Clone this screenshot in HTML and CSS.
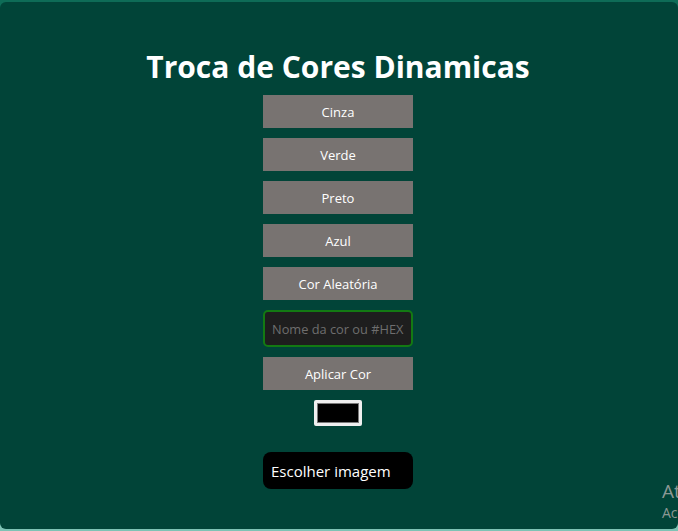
FILE: index.html
```html
<!DOCTYPE html>
<html lang="pt-BR">
<head>
<meta charset="utf-8">
<title>Troca de Cores Dinamicas</title>
<link rel="stylesheet" href="styles.css">
</head>
<body>
<main class="panel">
  <h1 class="title">Troca de Cores Dinamicas</h1>
  <div class="controls">
    <button class="btn">Cinza</button>
    <button class="btn">Verde</button>
    <button class="btn">Preto</button>
    <button class="btn">Azul</button>
    <button class="btn">Cor Aleatória</button>
    <input class="color-text" type="text" placeholder="Nome da cor ou #HEX">
    <button class="btn">Aplicar Cor</button>
    <div class="swatch"><span class="swatch-fill"></span></div>
    <button class="file-btn">Escolher imagem</button>
  </div>
  <div class="watermark">
    <span class="wm-big">Ativar o Windows</span>
    <span class="wm-small">Acesse Configurações</span>
  </div>
</main>
</body>
</html>
```
FILE: styles.css
```css
html, body {
  margin: 0;
  padding: 0;
  height: 531px;
  overflow: hidden;
}
body {
  background: linear-gradient(#0e6c57 0 50%, #7ec3b5 50% 100%);
  padding-top: 2px;
  box-sizing: border-box;
  font-family: "Open Sans", "Noto Sans", sans-serif;
}
.panel {
  position: relative;
  height: 527px;
  padding-right: 2px;
  background: #014438;
  border-radius: 6px;
  display: flex;
  flex-direction: column;
  align-items: center;
  overflow: hidden;
}
.title {
  margin: 41px 0 0;
  color: #ffffff;
  font-size: 30px;
  font-weight: 700;
  line-height: 48px;
}
.controls {
  margin-top: 4px;
  display: flex;
  flex-direction: column;
  align-items: center;
  gap: 10px;
}
.btn {
  width: 150px;
  height: 33px;
  border: none;
  background: #787371;
  color: #ffffff;
  font-family: inherit;
  font-size: 13px;
  padding: 0;
}
.color-text {
  width: 150px;
  height: 37px;
  box-sizing: border-box;
  border: 2px solid #137a13;
  border-radius: 5px;
  background: #1e1e1e;
  color: #ffffff;
  font-family: inherit;
  font-size: 12.8px;
  padding: 0 7px;
  outline: none;
}
.color-text::placeholder {
  color: #6e6e6e;
}
.swatch {
  width: 48px;
  height: 26px;
  box-sizing: border-box;
  border: 3px solid #efefef;
  border-radius: 2px;
  background: #efefef;
  display: flex;
}
.swatch-fill {
  flex: 1;
  background: #000000;
  border: 1px solid #7a7a7a;
}
.file-btn {
  margin-top: 16px;
  width: 150px;
  height: 37px;
  border: none;
  border-radius: 8px;
  background: #000000;
  color: #ffffff;
  font-family: inherit;
  font-size: 15px;
  text-align: left;
  padding: 0 8px;
}
.watermark {
  position: absolute;
  left: 662px;
  top: 480px;
  display: flex;
  flex-direction: column;
  color: #8c9894;
  white-space: nowrap;
  line-height: 1;
}
.wm-big {
  font-size: 19px;
}
.wm-small {
  margin-top: 5px;
  font-size: 14px;
}
```
